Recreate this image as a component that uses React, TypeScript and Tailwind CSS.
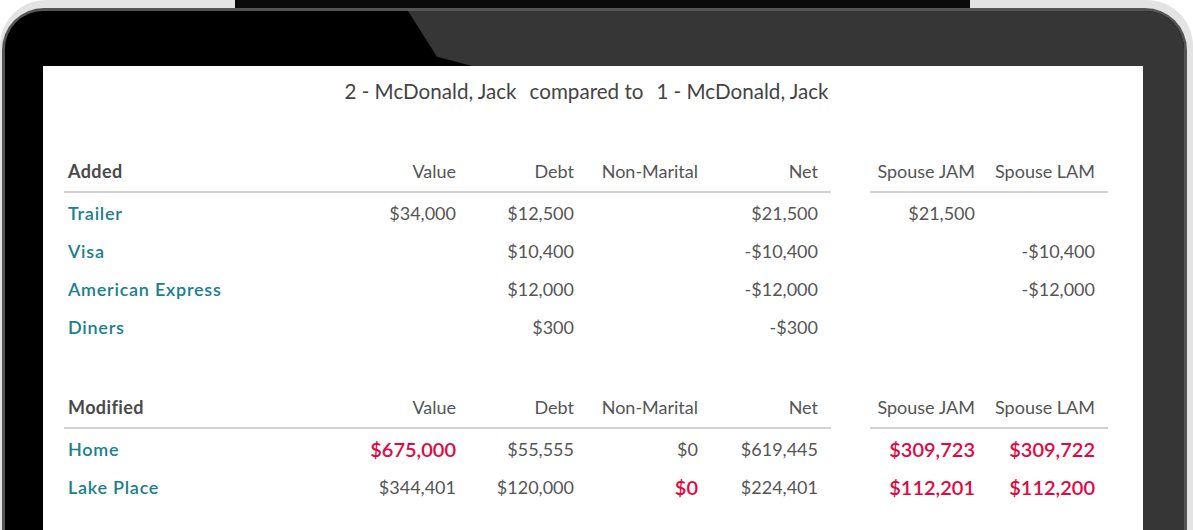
const sans = "font-['Lato','Liberation_Sans',sans-serif]";

type Cell = { v?: string; red?: boolean };
type Row = { name: string; cells: Cell[]; spouse: Cell[] };

const added: Row[] = [
  {
    name: "Trailer",
    cells: [{ v: "$34,000" }, { v: "$12,500" }, {}, { v: "$21,500" }],
    spouse: [{ v: "$21,500" }, {}],
  },
  {
    name: "Visa",
    cells: [{}, { v: "$10,400" }, {}, { v: "-$10,400" }],
    spouse: [{}, { v: "-$10,400" }],
  },
  {
    name: "American Express",
    cells: [{}, { v: "$12,000" }, {}, { v: "-$12,000" }],
    spouse: [{}, { v: "-$12,000" }],
  },
  {
    name: "Diners",
    cells: [{}, { v: "$300" }, {}, { v: "-$300" }],
    spouse: [{}, {}],
  },
];

const modified: Row[] = [
  {
    name: "Home",
    cells: [{ v: "$675,000", red: true }, { v: "$55,555" }, { v: "$0" }, { v: "$619,445" }],
    spouse: [
      { v: "$309,723", red: true },
      { v: "$309,722", red: true },
    ],
  },
  {
    name: "Lake Place",
    cells: [{ v: "$344,401" }, { v: "$120,000" }, { v: "$0", red: true }, { v: "$224,401" }],
    spouse: [
      { v: "$112,201", red: true },
      { v: "$112,200", red: true },
    ],
  },
];

const mainCols = "grid grid-cols-[282px_123px_118px_124px_120px]";
const spouseCols = "grid grid-cols-[118px_120px]";

const Num = ({ c }: { c: Cell }) => (
  <div
    className={`flex items-center justify-end pr-[13px] ${
      c.red ? "text-[20px] font-semibold text-[#e3073f]" : "text-[18px] text-[#555]"
    }`}
  >
    {c.v}
  </div>
);

const Section = ({ title, rows, className = "" }: { title: string; rows: Row[]; className?: string }) => {
  const heads = ["Value", "Debt", "Non-Marital", "Net"];
  return (
    <div className={`flex gap-[39px] ${className}`}>
      {/* main table */}
      <div className="w-[767px]">
        <div className={`${mainCols} h-[38px] border-b-2 border-[#d2d2d2] text-[18px] text-[#555]`}>
          <div className="flex items-end pb-[6px] pl-[4px] font-bold tracking-[0.4px] text-[#4a4a4a]">{title}</div>
          {heads.map((h) => (
            <div key={h} className="flex items-end justify-end pb-[6px] pr-[13px]">
              {h}
            </div>
          ))}
        </div>
        {rows.map((r) => (
          <div key={r.name} className={`${mainCols} h-[38px] pt-[2px]`}>
            <div className="flex items-center pl-[4px] text-[18px] font-semibold tracking-[0.75px] text-[#1a808c]">
              {r.name}
            </div>
            {r.cells.map((c, i) => (
              <Num key={i} c={c} />
            ))}
          </div>
        ))}
      </div>

      {/* spouse table */}
      <div className="w-[238px]">
        <div className={`${spouseCols} h-[38px] border-b-2 border-[#d2d2d2] text-[18px] text-[#555]`}>
          <div className="flex items-end justify-end pb-[6px] pr-[13px]">Spouse JAM</div>
          <div className="flex items-end justify-end pb-[6px] pr-[13px]">Spouse LAM</div>
        </div>
        {rows.map((r) => (
          <div key={r.name} className={`${spouseCols} h-[38px] pt-[2px]`}>
            {r.spouse.map((c, i) => (
              <Num key={i} c={c} />
            ))}
          </div>
        ))}
      </div>
    </div>
  );
};

export default function App() {
  return (
    <div className={`relative h-[530px] w-[1193px] overflow-hidden bg-white ${sans}`}>
      {/* device frame */}
      <div className="h-[620px] rounded-t-[46px] bg-[#e3e3e3] pl-[2px] pr-[6px] pt-[8px]">
        <div className="h-full rounded-t-[42px] bg-[#555] p-[3px]">
          <div className="relative h-full overflow-hidden rounded-t-[38px] bg-black pl-[38px] pr-[41px] pt-[55px]">
            {/* glossy reflection */}
            <svg className="absolute inset-0 h-full w-full" viewBox="0 0 1179 609" preserveAspectRatio="none">
              <polygon points="403,0 1179,0 1179,609 470,609 470,56 432,46" fill="#363636" />
            </svg>

            <div className="relative h-full bg-white">
              <div className="flex justify-center pr-[13px] pt-[13px] text-[20.6px] leading-[24px] text-[#444]">
                <span>2 - McDonald, Jack</span>
                <span className="ml-[13px]">compared to</span>
                <span className="ml-[13px]">1 - McDonald, Jack</span>
              </div>

              <div className="pl-[21px]">
                <Section title="Added" rows={added} className="mt-[52px]" />
                <Section title="Modified" rows={modified} className="mt-[46px]" />
              </div>
            </div>
          </div>
        </div>
      </div>

      {/* top edge strip */}
      <div className="absolute left-[235px] top-0 h-[8px] w-[735px] bg-[#0a0a0a]" />
    </div>
  );
}
